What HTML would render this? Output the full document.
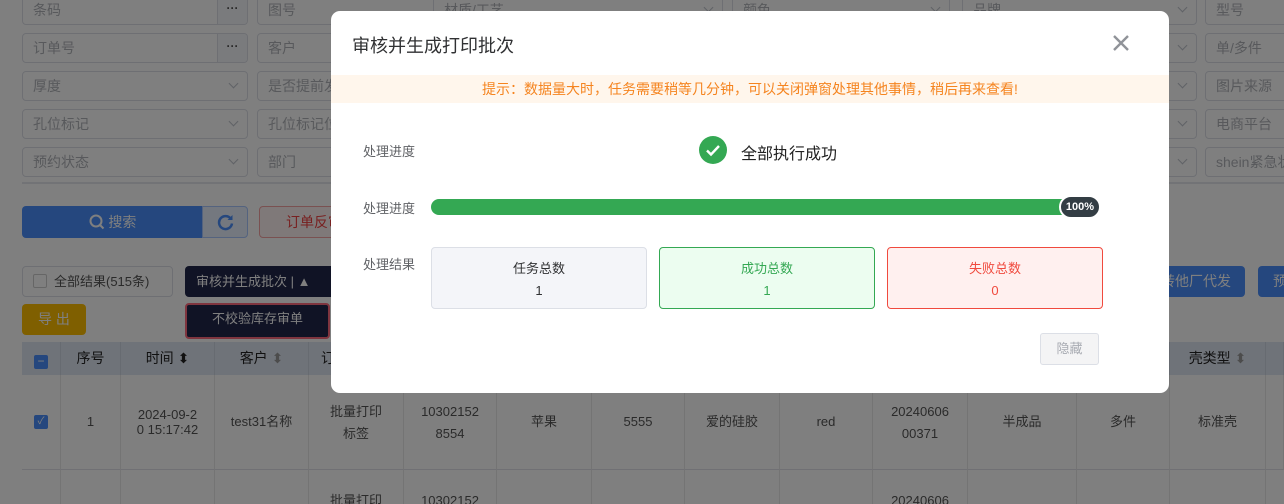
<!DOCTYPE html>
<html><head><meta charset="utf-8"><style>
*{box-sizing:border-box;margin:0;padding:0}
html{width:1284px;height:504px;overflow:hidden}
body{width:1284px;height:504px;overflow:hidden;background:#fff;font-family:"Liberation Sans","Noto Sans CJK SC",sans-serif;position:relative;color:#333}
.a{position:absolute}
.inp{position:absolute;height:30px;border:1px solid #dcdfe6;border-radius:4px;background:#fff;color:#b0b3b8;font-size:14px;line-height:28px;padding-left:10px;white-space:nowrap;overflow:hidden}
.dots{position:absolute;right:0;top:0;width:30px;height:28px;border-left:1px solid #dcdfe6;background:#f5f7fa;text-align:center;color:#555;font-size:12px;line-height:24px;font-weight:bold}
.arr{position:absolute;right:10px;top:8px;width:7px;height:7px;border-right:1px solid #c0c4cc;border-bottom:1px solid #c0c4cc;transform:rotate(45deg)}
.th{position:absolute;top:342px;height:33px;background:#dfe6f2;border-right:1px solid #cfd6e2;font-size:14px;color:#222;text-align:center;line-height:33px}
.td{position:absolute;border-right:1px solid #e8e8e8;border-bottom:1px solid #e0e0e8;font-size:13px;color:#555;text-align:center;display:flex;align-items:center;justify-content:center;line-height:22px}
.ov{position:absolute;left:0;top:0;width:1284px;height:504px;background:rgba(0,0,0,.5)}
.m{position:absolute;left:331px;top:11px;width:838px;height:382px;background:#fff;border-radius:9px}
.lab{position:absolute;left:32px;font-size:13px;color:#606266}
.card{position:absolute;top:236px;width:216px;height:62px;border-radius:4px;text-align:center;font-size:13px;padding-top:10px;line-height:22px}
</style></head><body>
<div class="inp" style="left:22px;top:-5px;width:226px">条码<div class="dots">···</div></div>
<div class="inp" style="left:257px;top:-5px;width:180px">图号</div>
<div class="inp" style="left:433px;top:-5px;width:290px">材质/工艺<div class="arr"></div></div>
<div class="inp" style="left:732px;top:-5px;width:218px">颜色<div class="arr"></div></div>
<div class="inp" style="left:962px;top:-5px;width:235px">品牌<div class="arr"></div></div>
<div class="inp" style="left:1205px;top:-5px;width:100px">型号</div>
<div class="inp" style="left:22px;top:33px;width:226px">订单号<div class="dots">···</div></div>
<div class="inp" style="left:257px;top:33px;width:180px">客户</div>
<div class="inp" style="left:1100px;top:33px;width:97px"><div class="arr"></div></div>
<div class="inp" style="left:1205px;top:33px;width:100px">单/多件</div>
<div class="inp" style="left:22px;top:71px;width:226px">厚度<div class="arr"></div></div>
<div class="inp" style="left:257px;top:71px;width:180px">是否提前发</div>
<div class="inp" style="left:1100px;top:71px;width:97px"><div class="arr"></div></div>
<div class="inp" style="left:1205px;top:71px;width:100px">图片来源</div>
<div class="inp" style="left:22px;top:109px;width:226px">孔位标记<div class="arr"></div></div>
<div class="inp" style="left:257px;top:109px;width:180px">孔位标记位</div>
<div class="inp" style="left:1100px;top:109px;width:97px"><div class="arr"></div></div>
<div class="inp" style="left:1205px;top:109px;width:100px">电商平台</div>
<div class="inp" style="left:22px;top:147px;width:226px">预约状态<div class="arr"></div></div>
<div class="inp" style="left:257px;top:147px;width:180px">部门</div>
<div class="inp" style="left:1100px;top:147px;width:97px"><div class="arr"></div></div>
<div class="inp" style="left:1205px;top:147px;width:100px">shein紧急状</div>
<div class="a" style="left:22px;top:182px;width:1262px;height:2px;background:#e4e7ed"></div>
<div class="a" style="left:22px;top:206px;width:181px;height:32px;background:#4a8ffc;border-radius:4px 0 0 4px;color:#fff;font-size:14px;text-align:center;line-height:32px">
<svg width="16" height="16" viewBox="0 0 16 16" style="vertical-align:-3px"><circle cx="7" cy="7" r="5.5" fill="none" stroke="#fff" stroke-width="2"/><path d="M11 11l3.5 3.5" stroke="#fff" stroke-width="2"/></svg> 搜索</div>
<div class="a" style="left:202px;top:206px;width:46px;height:32px;background:#e8f0ff;border:1px solid #a9c6ff;border-radius:0 4px 4px 0"><svg class="a" style="left:14px;top:7px" width="17" height="17" viewBox="0 0 17 17"><path d="M14 5A6.5 6.5 0 1 0 15 9.5" fill="none" stroke="#4a8ffc" stroke-width="2.5"/><path d="M15.5 1v5h-5z" fill="#4a8ffc"/></svg></div>
<div class="a" style="left:259px;top:206px;width:90px;height:32px;border:1px solid #f5a3a3;background:#fff3f3;border-radius:4px;color:#f04040;font-size:14px;line-height:30px;padding-left:26px">订单反审</div>
<div class="a" style="left:22px;top:266px;width:151px;height:31px;border:1px solid #dcdfe6;border-radius:4px;font-size:13px;line-height:29px;color:#555;padding-left:10px"><span style="display:inline-block;width:14px;height:14px;border:1px solid #ccc;border-radius:2px;vertical-align:-2px;margin-right:7px"></span>全部结果(515条)</div>
<div class="a" style="left:185px;top:266px;width:160px;height:31px;background:#20264a;border-radius:4px;color:#fff;font-size:13px;line-height:31px;padding-left:11px">审核并生成批次 | ▲</div>
<div class="a" style="left:22px;top:304px;width:64px;height:31px;background:#ffbf00;border-radius:4px;color:#fff;font-size:14px;line-height:31px;text-align:center">导 出</div>
<div class="a" style="left:185px;top:303px;width:145px;height:36px;background:#20264a;border:2px solid #ff6b7f;border-radius:4px;color:#fff;font-size:13px;line-height:28px;text-align:center">不校验库存审单</div>
<div class="a" style="left:1130px;top:266px;width:115px;height:31px;background:#4a8ffc;border-radius:4px;color:#fff;font-size:14px;line-height:31px;text-align:right;padding-right:14px">转他厂代发</div>
<div class="a" style="left:1258px;top:266px;width:60px;height:31px;background:#4a8ffc;border-radius:4px;color:#fff;font-size:14px;line-height:31px;padding-left:15px">预</div>
<div class="th" style="left:22px;width:39px"><span style="display:inline-block;width:14px;height:14px;background:#4a8ffc;border-radius:2px;vertical-align:-2px;color:#fff;line-height:12px;font-size:12px">−</span></div>
<div class="th" style="left:61px;width:60px">序号</div>
<div class="th" style="left:121px;width:94px">时间 ⬍</div>
<div class="th" style="left:215px;width:94px">客户 <span style="color:#999">⬍</span></div>
<div class="th" style="left:309px;width:95px;text-align:left;padding-left:12px">订</div>
<div class="th" style="left:404px;width:766px"></div>
<div class="th" style="left:1170px;width:96px">壳类型 <span style="color:#999">⬍</span></div>
<div class="th" style="left:1266px;width:18px"></div>
<div class="td" style="left:22px;top:375px;width:39px;height:95px"><span style="display:inline-block;width:14px;height:14px;background:#4a8ffc;border-radius:2px;color:#fff;font-size:10px;line-height:14px">✓</span></div>
<div class="td" style="left:61px;top:375px;width:60px;height:95px">1</div>
<div class="td" style="left:121px;top:375px;width:94px;height:95px;line-height:15px">2024-09-2<br>0 15:17:42</div>
<div class="td" style="left:215px;top:375px;width:94px;height:95px">test31名称</div>
<div class="td" style="left:309px;top:375px;width:95px;height:95px;align-items:flex-start;padding-top:26px">批量打印<br>标签</div>
<div class="td" style="left:404px;top:375px;width:93px;height:95px;align-items:flex-start;padding-top:26px">10302152<br>8554</div>
<div class="td" style="left:497px;top:375px;width:95px;height:95px;align-items:flex-start;padding-top:36px">苹果</div>
<div class="td" style="left:592px;top:375px;width:93px;height:95px;align-items:flex-start;padding-top:36px">5555</div>
<div class="td" style="left:685px;top:375px;width:95px;height:95px;align-items:flex-start;padding-top:36px">爱的硅胶</div>
<div class="td" style="left:780px;top:375px;width:93px;height:95px;align-items:flex-start;padding-top:36px">red</div>
<div class="td" style="left:873px;top:375px;width:95px;height:95px;align-items:flex-start;padding-top:26px">20240606<br>00371</div>
<div class="td" style="left:968px;top:375px;width:109px;height:95px;align-items:flex-start;padding-top:36px">半成品</div>
<div class="td" style="left:1077px;top:375px;width:93px;height:95px;align-items:flex-start;padding-top:36px">多件</div>
<div class="td" style="left:1170px;top:375px;width:96px;height:95px">标准壳</div>
<div class="td" style="left:1266px;top:375px;width:18px;height:95px"></div>
<div class="td" style="left:22px;top:470px;width:39px;height:34px;border-bottom:0"></div>
<div class="td" style="left:61px;top:470px;width:60px;height:34px;border-bottom:0"></div>
<div class="td" style="left:121px;top:470px;width:94px;height:34px;border-bottom:0"></div>
<div class="td" style="left:215px;top:470px;width:94px;height:34px;border-bottom:0"></div>
<div class="td" style="left:309px;top:470px;width:95px;height:34px;border-bottom:0;align-items:flex-start;padding-top:20px">批量打印</div>
<div class="td" style="left:404px;top:470px;width:93px;height:34px;border-bottom:0;align-items:flex-start;padding-top:20px">10302152</div>
<div class="td" style="left:497px;top:470px;width:95px;height:34px;border-bottom:0"></div>
<div class="td" style="left:592px;top:470px;width:93px;height:34px;border-bottom:0"></div>
<div class="td" style="left:685px;top:470px;width:95px;height:34px;border-bottom:0"></div>
<div class="td" style="left:780px;top:470px;width:93px;height:34px;border-bottom:0"></div>
<div class="td" style="left:873px;top:470px;width:95px;height:34px;border-bottom:0;align-items:flex-start;padding-top:20px">20240606</div>
<div class="td" style="left:968px;top:470px;width:109px;height:34px;border-bottom:0"></div>
<div class="td" style="left:1077px;top:470px;width:93px;height:34px;border-bottom:0"></div>
<div class="td" style="left:1170px;top:470px;width:96px;height:34px;border-bottom:0"></div>
<div class="ov"></div>
<div class="m">
<div class="a" style="left:21px;top:21px;font-size:18px;color:#303133">审核并生成打印批次</div>
<svg class="a" style="left:782px;top:24px" width="16" height="16" viewBox="0 0 16 16"><path d="M1 1L15 15M15 1L1 15" stroke="#909399" stroke-width="2.4"/></svg>
<div class="a" style="left:0;top:64px;width:838px;height:28px;background:#fff6ec;color:#f5841f;font-size:14px;text-align:center;line-height:28px">提示：数据量大时，任务需要稍等几分钟，可以关闭弹窗处理其他事情，稍后再来查看!</div>
<div class="lab" style="top:130px">处理进度</div>
<svg class="a" style="left:368px;top:125px" width="28" height="28" viewBox="0 0 28 28"><circle cx="14" cy="14" r="14" fill="#34a853"/><path d="M8 14.5l4 4 8-8.5" fill="none" stroke="#fff" stroke-width="2.4"/></svg>
<div class="a" style="left:410px;top:129px;font-size:16px;color:#222">全部执行成功</div>
<div class="lab" style="top:187px">处理进度</div>
<div class="a" style="left:100px;top:188px;width:666px;height:16px;background:#34a853;border-radius:8px"></div>
<div class="a" style="left:728px;top:184px;width:42px;height:24px;background:#333d44;border:2px solid #fff;border-radius:12px;color:#fff;font-size:11px;font-weight:bold;line-height:20px;text-align:center">100%</div>
<div class="lab" style="top:243px">处理结果</div>
<div class="card" style="left:100px;background:#f4f5f9;border:1px solid #dcdfe6;color:#303133">任务总数<br>1</div>
<div class="card" style="left:328px;background:#ecfdf0;border:1px solid #34a853;color:#34a853">成功总数<br>1</div>
<div class="card" style="left:556px;background:#fff0ef;border:1px solid #f04a3e;color:#f04a3e">失败总数<br>0</div>
<div class="a" style="left:709px;top:322px;width:59px;height:32px;background:#f4f4f5;border:1px solid #dcdfe6;border-radius:3px;color:#a8abb2;font-size:13px;text-align:center;line-height:30px">隐藏</div>
</div>
</body></html>
